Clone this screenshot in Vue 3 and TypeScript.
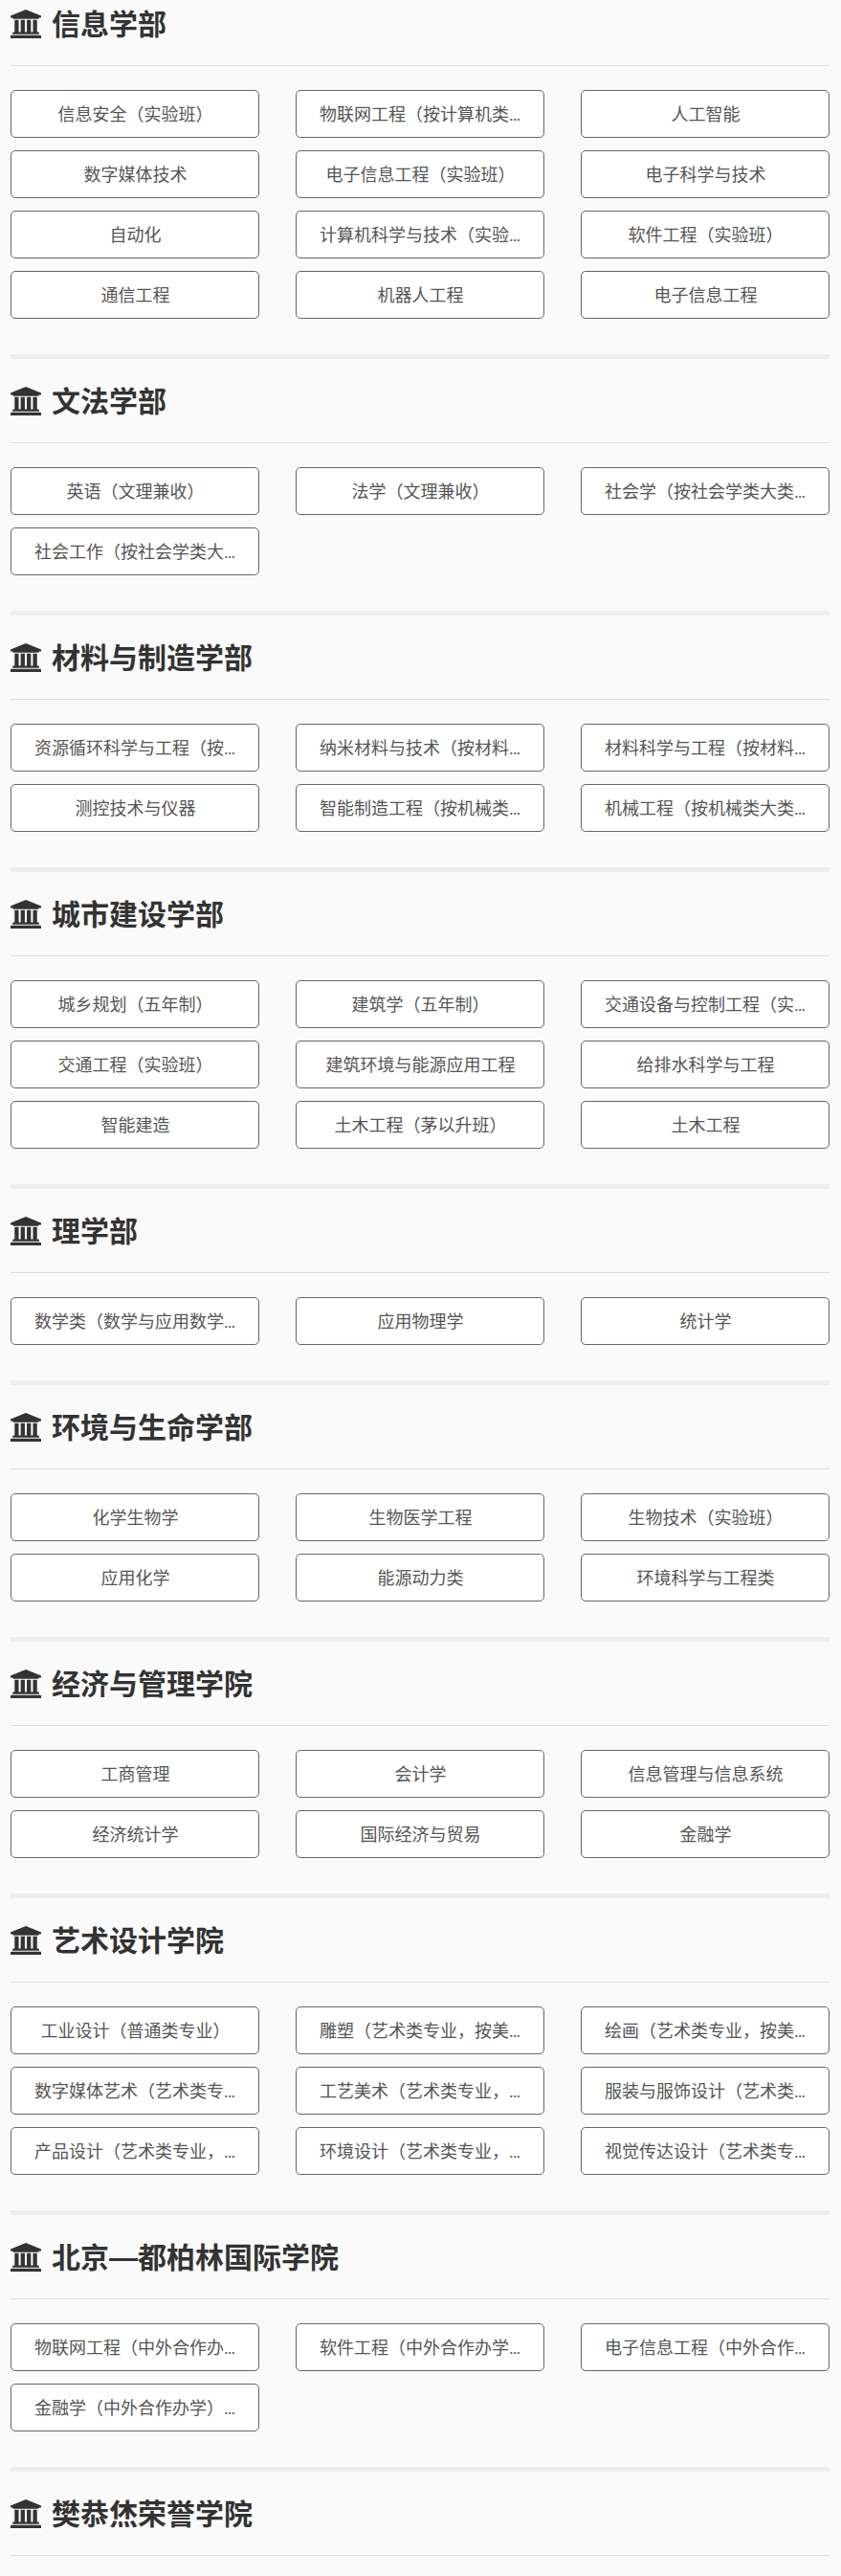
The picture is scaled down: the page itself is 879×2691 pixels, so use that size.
<template>
  <div class="page">
    <section v-for="group in groups" :key="group.name" class="group">
      <h2 class="group-title">
        <svg class="bank-icon" viewBox="0 0 1920 1792" aria-hidden="true">
          <path
            d="M960 0l960 384v128h-128q0 26-20.5 45t-48.5 19h-1526q-28 0-48.5-19t-20.5-45h-128v-128zm-704 640h256v768h128v-768h256v768h128v-768h256v768h128v-768h256v768h59q28 0 48.5 19t20.5 45v64h-1664v-64q0-26 20.5-45t48.5-19h59v-768zm1595 960q28 0 48.5 19t20.5 45v128h-1920v-128q0-26 20.5-45t48.5-19h1782z"
          />
        </svg>
        <span class="group-name">{{ group.name }}</span>
      </h2>
      <div v-if="group.majors.length" class="major-grid">
        <a v-for="major in group.majors" :key="major" class="major">{{ major }}</a>
      </div>
    </section>
  </div>
</template>

<script setup lang="ts">
interface Group {
  name: string;
  majors: string[];
}

const groups: Group[] = [
  {
    name: '信息学部',
    majors: [
      '信息安全（实验班）',
      '物联网工程（按计算机类招生）',
      '人工智能',
      '数字媒体技术',
      '电子信息工程（实验班）',
      '电子科学与技术',
      '自动化',
      '计算机科学与技术（实验班）',
      '软件工程（实验班）',
      '通信工程',
      '机器人工程',
      '电子信息工程',
    ],
  },
  {
    name: '文法学部',
    majors: ['英语（文理兼收）', '法学（文理兼收）', '社会学（按社会学类大类招生）', '社会工作（按社会学类大类招生）'],
  },
  {
    name: '材料与制造学部',
    majors: [
      '资源循环科学与工程（按材料类招生）',
      '纳米材料与技术（按材料类招生）',
      '材料科学与工程（按材料类招生）',
      '测控技术与仪器',
      '智能制造工程（按机械类招生）',
      '机械工程（按机械类大类招生）',
    ],
  },
  {
    name: '城市建设学部',
    majors: [
      '城乡规划（五年制）',
      '建筑学（五年制）',
      '交通设备与控制工程（实验班）',
      '交通工程（实验班）',
      '建筑环境与能源应用工程',
      '给排水科学与工程',
      '智能建造',
      '土木工程（茅以升班）',
      '土木工程',
    ],
  },
  {
    name: '理学部',
    majors: ['数学类（数学与应用数学等）', '应用物理学', '统计学'],
  },
  {
    name: '环境与生命学部',
    majors: ['化学生物学', '生物医学工程', '生物技术（实验班）', '应用化学', '能源动力类', '环境科学与工程类'],
  },
  {
    name: '经济与管理学院',
    majors: ['工商管理', '会计学', '信息管理与信息系统', '经济统计学', '国际经济与贸易', '金融学'],
  },
  {
    name: '艺术设计学院',
    majors: [
      '工业设计（普通类专业）',
      '雕塑（艺术类专业，按美术类招生）',
      '绘画（艺术类专业，按美术类招生）',
      '数字媒体艺术（艺术类专业招生）',
      '工艺美术（艺术类专业，按美术类招生）',
      '服装与服饰设计（艺术类专业）',
      '产品设计（艺术类专业，按美术类招生）',
      '环境设计（艺术类专业，按美术类招生）',
      '视觉传达设计（艺术类专业招生）',
    ],
  },
  {
    name: '北京—都柏林国际学院',
    majors: [
      '物联网工程（中外合作办学）',
      '软件工程（中外合作办学）专业',
      '电子信息工程（中外合作办学）',
      '金融学（中外合作办学）专业',
    ],
  },
  {
    name: '樊恭烋荣誉学院',
    majors: [],
  },
];
</script>

<style>
html,
body {
  background: #fafafa;
}
</style>

<style scoped>
.page {
  padding: 0 12px 20px 11px;
  font-family: 'Liberation Sans', 'Noto Sans CJK SC', sans-serif;
}

.group {
  padding-bottom: 37px;
  border-bottom: 5px solid #eee;
}

.group:last-child {
  padding-bottom: 0;
  border-bottom: none;
}

.group-title {
  display: flex;
  align-items: center;
  gap: 11px;
  height: 30px;
  margin: 0;
  padding: 29px 0 28px;
  border-bottom: 1px solid #ddd;
  box-sizing: content-box;
  font-size: 30px;
  line-height: 30px;
  font-weight: 700;
  color: #333;
}

.group:first-child .group-title {
  padding-top: 10px;
}

.group-name {
  padding-top: 2px;
}

.bank-icon {
  width: 32px;
  height: 30px;
  flex: none;
  fill: #333;
}

.major-grid {
  display: grid;
  grid-template-columns: repeat(3, 260px);
  column-gap: 38px;
  row-gap: 13px;
  margin-top: 25px;
}

.major {
  display: block;
  box-sizing: border-box;
  height: 50px;
  padding: 0 23px 0 24px;
  background: #fff;
  border: 1px solid #666;
  border-radius: 5px;
  font-family: Roboto, 'Noto Sans CJK SC', sans-serif;
  font-size: 18px;
  line-height: 50px;
  color: #555;
  text-align: center;
  white-space: nowrap;
  overflow: hidden;
  text-overflow: ellipsis;
}
</style>
